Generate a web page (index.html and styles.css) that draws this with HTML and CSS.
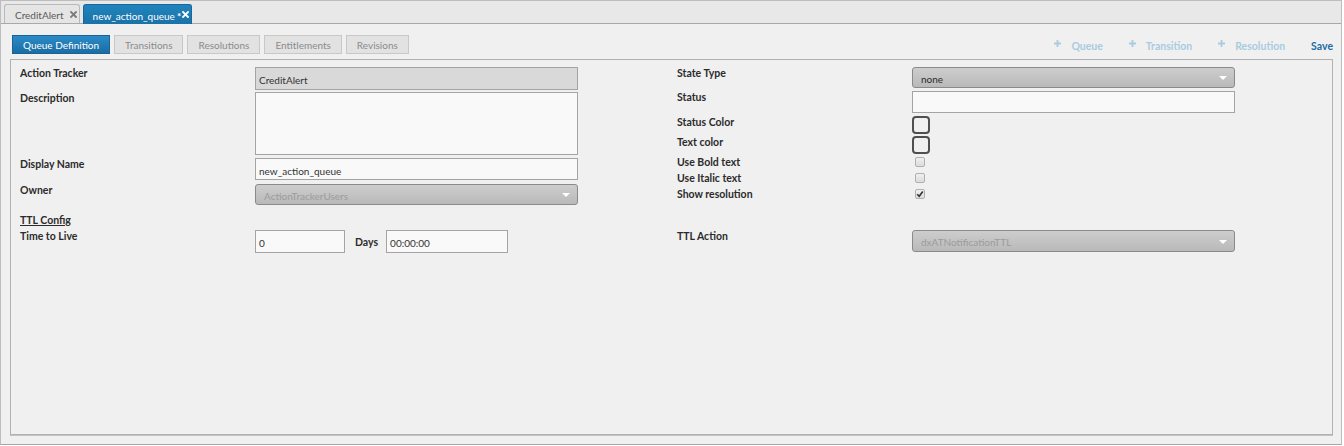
FILE: index.html
```html
<!DOCTYPE html>
<html>
<head>
<meta charset="utf-8">
<title>Queue Definition</title>
<link rel="stylesheet" href="styles.css">
</head>
<body>
<div class="app">
  <div class="tabbar">
    <div class="tab">
      <span class="tab-text">CreditAlert</span>
      <svg class="tab-x" width="7" height="7" viewBox="0 0 7 7"><path d="M1 1L6 6M6 1L1 6" stroke="currentColor" stroke-width="1.8" stroke-linecap="square"/></svg>
    </div>
    <div class="tab active">
      <span class="tab-text">new_action_queue</span><span class="star">*</span>
      <svg class="tab-x" width="7" height="7" viewBox="0 0 7 7"><path d="M1 1L6 6M6 1L1 6" stroke="currentColor" stroke-width="1.8" stroke-linecap="square"/></svg>
    </div>
  </div>

  <div class="content">
    <div class="toolbar">
      <div class="btns">
        <span class="btn on">Queue Definition</span>
        <span class="btn">Transitions</span>
        <span class="btn">Resolutions</span>
        <span class="btn">Entitlements</span>
        <span class="btn">Revisions</span>
      </div>
      <div class="links">
        <span class="link dim"><svg class="plus" width="7" height="7" viewBox="0 0 7 7"><path d="M3.5 0V7M0 3.5H7" stroke="currentColor" stroke-width="1.8"/></svg>Queue</span>
        <span class="link dim"><svg class="plus" width="7" height="7" viewBox="0 0 7 7"><path d="M3.5 0V7M0 3.5H7" stroke="currentColor" stroke-width="1.8"/></svg>Transition</span>
        <span class="link dim"><svg class="plus" width="7" height="7" viewBox="0 0 7 7"><path d="M3.5 0V7M0 3.5H7" stroke="currentColor" stroke-width="1.8"/></svg>Resolution</span>
        <span class="link save">Save</span>
      </div>
    </div>

    <div class="panel">
      <div class="form">
        <div class="col">
          <div class="row r-tracker">
            <div class="lbl">Action Tracker</div>
            <div class="inp dis">CreditAlert</div>
          </div>
          <div class="row r-desc">
            <div class="lbl">Description</div>
            <div class="inp ta"></div>
          </div>
          <div class="row r-name">
            <div class="lbl">Display Name</div>
            <div class="inp h22">new_action_queue</div>
          </div>
          <div class="row">
            <div class="lbl">Owner</div>
            <div class="sel dis"><span>ActionTrackerUsers</span><span class="caret"></span></div>
          </div>
        </div>

        <div class="col">
          <div class="row r-state">
            <div class="lbl">State Type</div>
            <div class="sel"><span>none</span><span class="caret"></span></div>
          </div>
          <div class="row r-status">
            <div class="lbl">Status</div>
            <div class="inp h22"></div>
          </div>
          <div class="row r-swatch">
            <div class="lbl">Status Color</div>
            <div class="swatch"></div>
          </div>
          <div class="row r-swatch2">
            <div class="lbl">Text color</div>
            <div class="swatch"></div>
          </div>
          <div class="row r-cb r-cb1">
            <div class="lbl">Use Bold text</div>
            <span class="cb"></span>
          </div>
          <div class="row r-cb">
            <div class="lbl">Use Italic text</div>
            <span class="cb"></span>
          </div>
          <div class="row r-cb">
            <div class="lbl">Show resolution</div>
            <span class="cb checked"><svg width="8" height="8" viewBox="0 0 8 8"><path d="M1.2 4.2L3.2 6.3L6.8 1.5" fill="none" stroke="#333" stroke-width="1.6"/></svg></span>
          </div>
        </div>

        <div class="col ttl">
          <div class="section-title">TTL Config</div>
          <div class="row r-ttl">
            <div class="lbl">Time to Live</div>
            <div class="inp small">0</div>
            <div class="days">Days</div>
            <div class="inp time">00:00:00</div>
          </div>
        </div>

        <div class="col ttl-r">
          <div class="row r-ttl">
            <div class="lbl">TTL Action</div>
            <div class="sel dis h22"><span>dxATNotificationTTL</span><span class="caret"></span></div>
          </div>
        </div>
      </div>
    </div>
  </div>
</div>
</body>
</html>
```

FILE: styles.css
```css
* {
  box-sizing: border-box;
}

html,
body {
  margin: 0;
  background: #ffffff;
}

body {
  font-family: "Lato", "Open Sans", sans-serif;
  font-size: 10px;
  color: #2b2b2b;
}

.app {
  width: 1342px;
  height: 445px;
  border: 1px solid #bdbdbd;
  border-bottom-color: #a6a6a6;
  background: #f0f0f0;
  display: flex;
  flex-direction: column;
}

/* tabs */
.tabbar {
  height: 23px;
  flex: none;
  background: #e8e8e8;
  border-bottom: 1px solid #a9a9a9;
  display: flex;
  align-items: flex-end;
  gap: 3px;
  padding-left: 3px;
}

.tab {
  height: 19px;
  display: flex;
  align-items: center;
  padding: 2px 2px 0 10px;
  border: 1px solid #b9b9b9;
  border-bottom: 0;
  border-radius: 3px 3px 0 0;
  background: #e5e5e5;
  color: #5a5a5a;
}

.tab .tab-x {
  margin-left: 6px;
  align-self: flex-start;
  margin-top: 4px;
  color: #7a7a7a;
}

.tab.active {
  background: linear-gradient(#2184bd, #1a72a8);
  border-color: #19669a;
  color: #ffffff;
  height: 20px;
  margin-bottom: -1px;
  padding-left: 9px;
}

.tab.active .tab-x {
  margin-left: 1px;
  color: #ffffff;
}

.star {
  margin-left: 2px;
  font-weight: 700;
  font-size: 10px;
  align-self: flex-start;
  margin-top: 3px;
}

/* content */
.content {
  flex: 1;
  display: flex;
  flex-direction: column;
  padding: 11px 8px 9px 9px;
}

.toolbar {
  height: 19px;
  flex: none;
  display: flex;
  align-items: center;
  margin-bottom: 5px;
}

.btns {
  display: flex;
  gap: 4px;
  padding-left: 2px;
  height: 19px;
}

.btn {
  height: 19px;
  display: flex;
  align-items: center;
  padding: 1px 10px 0;
  border: 1px solid #c8c8c8;
  background: #e2e2e2;
  color: #8b8b8b;
}

.btn.on {
  background: linear-gradient(#2b8bc7, #1a6da4);
  border-color: #1c6294;
  color: #ffffff;
}

.links {
  margin-left: auto;
  display: flex;
  align-items: center;
  gap: 26px;
}

.link {
  display: flex;
  align-items: center;
  gap: 10px;
  font-weight: 700;
  font-size: 10.5px;
  padding-top: 2px;
}

.link.dim {
  color: #a9cbe0;
}

.link .plus {
  margin-top: -5px;
}

.link.save {
  color: #1d6ca3;
}

/* panel */
.panel {
  flex: 1;
  border: 1px solid #b1b1b1;
  box-shadow: 0 1px 0 #c4c4c4;
  padding: 7px 9px;
}

.form {
  display: grid;
  grid-template-columns: 657px 657px;
}

.row {
  display: flex;
  align-items: flex-start;
}

.lbl {
  width: 235px;
  flex: none;
  font-weight: 700;
  font-size: 10.5px;
  line-height: 13px;
  color: #2b2b2b;
}

.inp {
  width: 323px;
  height: 23px;
  flex: none;
  border: 1px solid #a4a4a4;
  background: #f9f9f9;
  padding: 3px 3px 0;
  display: flex;
  align-items: center;
  color: #333333;
}

.inp.dis {
  background: #d9d9d9;
}

.inp.h22 {
  height: 22px;
}

.inp.ta {
  height: 63px;
}

.sel {
  width: 323px;
  height: 21px;
  flex: none;
  display: flex;
  align-items: center;
  padding: 2px 0 0 8px;
  border: 1px solid #8a8a8a;
  border-radius: 3px;
  background: linear-gradient(#cdcdcd, #b9b9b9);
  color: #2b2b2b;
}

.sel.dis {
  color: #9c9c9c;
}

.sel.h22 {
  height: 22px;
}

.caret {
  margin-left: auto;
  margin-right: 7px;
  margin-top: -1px;
  width: 0;
  height: 0;
  border-left: 4px solid transparent;
  border-right: 4px solid transparent;
  border-top: 4px solid #ffffff;
}

.swatch {
  width: 18px;
  height: 18px;
  border: 2px solid #4f4f4f;
  border-radius: 4px;
}

.cb {
  width: 10px;
  height: 10px;
  margin-left: 3px;
  margin-top: 1px;
  border: 1px solid #b0b0b0;
  border-radius: 2px;
  background: linear-gradient(#f0f0f0, #dcdcdc);
  display: flex;
  align-items: center;
  justify-content: center;
}

/* row spacing */
.r-tracker { margin-bottom: 2px; }
.r-desc { margin-bottom: 3px; }
.r-name { margin-bottom: 4px; }
.r-state { margin-bottom: 3px; }
.r-status { margin-bottom: 3px; }
.r-swatch { margin-bottom: 2px; }
.r-cb { height: 16px; }
.r-cb1 { margin-top: 2px; }

.section-title {
  margin-top: 9px;
  margin-bottom: 3px;
  font-weight: 700;
  font-size: 10.5px;
  line-height: 13px;
  text-decoration: underline;
  color: #2b2b2b;
}

.ttl-r {
  align-self: end;
}

.r-ttl {
  height: 23px;
}

.inp.small {
  width: 90px;
}

.days {
  font-weight: 700;
  font-size: 10.5px;
  align-self: center;
  margin: 0 8px 0 10px;
}

.inp.time {
  width: 122px;
}
```
